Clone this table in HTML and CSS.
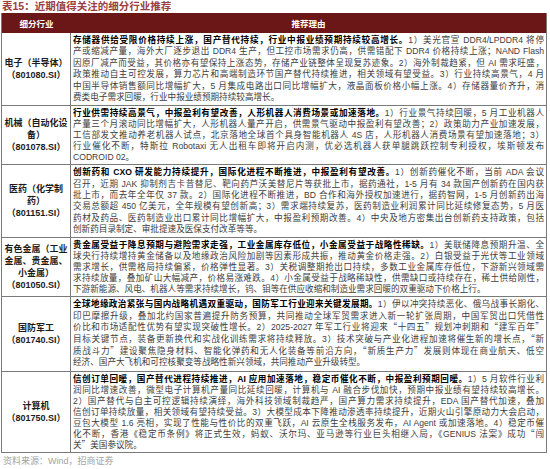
FILE: index.html
```html
<!DOCTYPE html>
<html lang="zh-CN">
<head>
<meta charset="utf-8">
<title>表15：近期值得关注的细分行业推荐</title>
<link rel="stylesheet" href="styles.css">
</head>
<body>
<div class="page">
  <h1 class="title">表15：近期值得关注的细分行业推荐</h1>
  <div class="table">
    <div class="head">
      <div class="hc">细分行业</div>
      <div class="hc">推荐理由</div>
    </div>

    <div class="row">
      <div class="name"><span>电子（半导体）</span><span>（801080.SI）</span></div>
      <div class="reason loose">
        <span class="ln"><b class="key">存储器供给受限价格持续上涨，国产替代持续，行业中报业绩预期持续较高增长。</b>1）美光官宣 DDR4/LPDDR4 将停</span>
        <span class="ln">产或缩减产量，海外大厂逐步退出 DDR4 生产，但工控市场需求仍高，供需错配下 DDR4 价格持续上涨；NAND Flash</span>
        <span class="ln">因原厂减产而受益，其价格亦有望保持上涨态势，存储产业链整体呈现复苏迹象。2）海外制裁趋紧，但 AI 需求旺盛，</span>
        <span class="ln">政策推动自主可控发展，算力芯片和高端制造环节国产替代持续推进，相关领域有望受益。3）行业持续高景气，4 月</span>
        <span class="ln">中国半导体销售额同比增幅扩大，5 月集成电路出口同比增幅扩大，液晶面板价格小幅上涨。4）存储器量价齐升，消</span>
        <span class="ln">费类电子需求回暖，行业中报业绩预期持续较高增长。</span>
      </div>
    </div>

    <div class="row">
      <div class="name"><span>机械（自动化设</span><span>备）</span><span>（801078.SI）</span></div>
      <div class="reason">
        <span class="ln"><b class="key">行业供需持续高景气，中报盈利有望改善，人形机器人消费场景或加速落地。</b>1）行业景气持续回暖，5 月工业机器人</span>
        <span class="ln">产量三个月滚动同比增幅扩大，人形机器人量产开启，供需景气驱动中报盈利有望改善；2）政策助力产业加速发展，</span>
        <span class="ln">工信部发文推动养老机器人试点，北京落地全球首个具身智能机器人 4S 店，人形机器人消费场景有望加速落地；3）</span>
        <span class="ln">行业催化不断，特斯拉 Robotaxi 无人出租车即将开启内测，优必选机器人获单腿跳跃控制专利授权，埃斯顿发布</span>
        <span class="ln">CODROID 02。</span>
      </div>
    </div>

    <div class="row">
      <div class="name"><span>医药（化学制</span><span>药）</span><span>（801151.SI）</span></div>
      <div class="reason loose">
        <span class="ln"><b class="key">创新药和 CXO 研发能力持续提升，国际化进程不断推进，中报盈利有望改善。</b>1）创新药催化不断，当前 ADA 会议</span>
        <span class="ln">召开，近期 JAK 抑制剂吉卡昔替尼、靶向药芦沃美替尼片等获批上市，据药通社，1-5 月有 34 款国产创新药在国内获</span>
        <span class="ln">批上市，而去年全年仅 37 款。2）国际化进程不断推进，BD 合作和海外授权加速进行，据药智网，1-5 月创新药出海</span>
        <span class="ln">交易总额超 450 亿美元，全年规模有望创新高；3）需求端持续复苏，医药制造业利润累计同比延续修复态势，5 月医</span>
        <span class="ln">药材及药品、医药制造业出口累计同比增幅扩大，中报盈利预期改善。4）中央及地方密集出台创新药支持政策，包括</span>
        <span class="ln">创新药目录制定、审批提速及医保支付改革等等。</span>
      </div>
    </div>

    <div class="row">
      <div class="name"><span>有色金属（工业</span><span>金属、贵金属、</span><span>小金属）</span><span>（801050.SI）</span></div>
      <div class="reason">
        <span class="ln"><b class="key">贵金属受益于降息预期与避险需求走强，工业金属库存低位，小金属受益于战略性稀缺。</b>1）美联储降息预期升温、全</span>
        <span class="ln">球央行持续增持黄金储备以及地缘政治风险加剧等因素形成共振，推动黄金价格走强。2）白银受益于光伏等工业领域</span>
        <span class="ln">需求增长，供需格局持续偏紧，价格弹性显著。3）关税调整期抢出口持续，多数工业金属库存低位，下游新兴领域需</span>
        <span class="ln">求持续放量，叠加矿山大幅减产，价格易涨难跌。4）小金属受益于战略稀缺性，供需缺口或持续存在，稀土供给刚性，</span>
        <span class="ln">下游新能源、风电、机器人等需求持续增长，钨、钼等在供应收缩和制造业需求回暖的双重驱动下价格上行。</span>
      </div>
    </div>

    <div class="row">
      <div class="name"><span>国防军工</span><span>（801740.SI）</span></div>
      <div class="reason tall">
        <span class="ln"><b class="key">全球地缘政治紧张与国内战略机遇双重驱动，国防军工行业迎来关键发展期。</b>1）伊以冲突持续恶化、俄乌战事长期化、</span>
        <span class="ln">印巴摩擦升级，叠加北约国家普遍提升防务预算，共同推动全球军贸需求进入新一轮扩张周期，中国军贸出口凭借性</span>
        <span class="ln">价比和市场适配性优势有望实现突破性增长。2）2025-2027 年军工行业将迎来<span class="q">“</span>十四五<span class="q">”</span>规划冲刺期和<span class="q">“</span>建军百年<span class="q">”</span></span>
        <span class="ln">目标关键节点，装备更新换代和实战化训练需求将持续释放。3）技术突破与产业化进程加速将催生新的增长点，<span class="q">“</span>新</span>
        <span class="ln">质战斗力<span class="q">”</span>建设聚焦隐身材料、智能化弹药和无人化装备等前沿方向，<span class="q">“</span>新质生产力<span class="q">”</span>发展则体现在商业航天、低空</span>
        <span class="ln">经济、国产大飞机和可控核聚变等战略性新兴领域，共同推动产业升级转型。</span>
      </div>
    </div>

    <div class="row">
      <div class="name"><span>计算机</span><span>（801750.SI）</span></div>
      <div class="reason">
        <span class="ln"><b class="key">信创订单回暖，国产替代进程持续推进，AI 应用加速落地，稳定币催化不断，中报盈利预期回暖。</b>1）5 月软件行业利</span>
        <span class="ln">润同比增速改善，微型电子计算机产量同比延续回暖，计算机与 AI 融合步伐加快，预期中报业绩有望持续较高增长。</span>
        <span class="ln">2）国产替代与自主可控逻辑持续演绎，海外科技领域制裁趋严，国产算力需求持续提升，EDA 国产替代加速，叠加</span>
        <span class="ln">信创订单持续放量，相关领域有望持续受益。3）大模型成本下降推动渗透率持续提升，近期火山引擎原动力大会启动，</span>
        <span class="ln">豆包大模型 1.6 亮相，实现了性能与性价比的双重飞跃，AI 云原生全栈服务发布，AI Agent 或加速落地。4）稳定币催</span>
        <span class="ln">化不断，香港《稳定币条例》将正式生效，蚂蚁、沃尔玛、亚马逊等行业巨头相继入局，《GENIUS 法案》成功<span class="q">“</span>闯</span>
        <span class="ln">关<span class="q">”</span>美国参议院。</span>
      </div>
    </div>
  </div>
  <p class="source">资料来源：Wind，招商证券</p>
</div>
</body>
</html>
```

FILE: styles.css
```css
* {
  box-sizing: border-box;
}

body {
  margin: 0;
  background: #ffffff;
  font-family: "Liberation Sans", "Noto Sans CJK SC", sans-serif;
}

.page {
  padding: 0 2px 0 1px;
}

.title {
  margin: 0;
  height: 13px;
  padding-left: 1px;
  font-size: 10.5px;
  line-height: 12px;
  font-weight: 700;
  color: #9a4040;
}

.table {
  width: 546px;
  border-left: 1px solid #7a7a7a;
  border-right: 1px solid #7a7a7a;
  border-bottom: 1px solid #7a7a7a;
}

.head {
  display: grid;
  grid-template-columns: 69px 1fr;
  height: 20px;
  align-items: center;
  background: #6c1717;
  color: #ffffff;
  font-size: 8.5px;
  font-weight: 700;
  text-align: center;
}

.row {
  display: grid;
  grid-template-columns: 69px 1fr;
}

.row + .row {
  border-top: 1px solid #7a7a7a;
}

.name {
  display: flex;
  flex-direction: column;
  justify-content: center;
  align-items: center;
  border-right: 1px solid #7a7a7a;
  font-size: 9px;
  line-height: 12px;
  font-weight: 700;
  color: #1c1c1c;
  text-align: center;
}

.reason {
  padding: 2px 2px 1px 2px;
  font-size: 8.6px;
  line-height: 11.1px;
  color: #3d3d3d;
  overflow: hidden;
}

.reason.loose {
  line-height: 11.45px;
}

.reason.tall {
  padding: 2px 2px 2px 2px;
  line-height: 11.6px;
}

.ln {
  display: block;
  height: 1lh;
  white-space: nowrap;
  text-align: justify;
  text-align-last: justify;
}

.ln:last-child {
  text-align-last: left;
}

.key {
  font-weight: 700;
  color: #000000;
}

.q {
  font-family: "Noto Sans CJK SC", sans-serif;
  line-height: 0;
}

.source {
  margin: 3px 0 0 2px;
  font-size: 9px;
  line-height: 11px;
  color: #a3a3a3;
}
```
